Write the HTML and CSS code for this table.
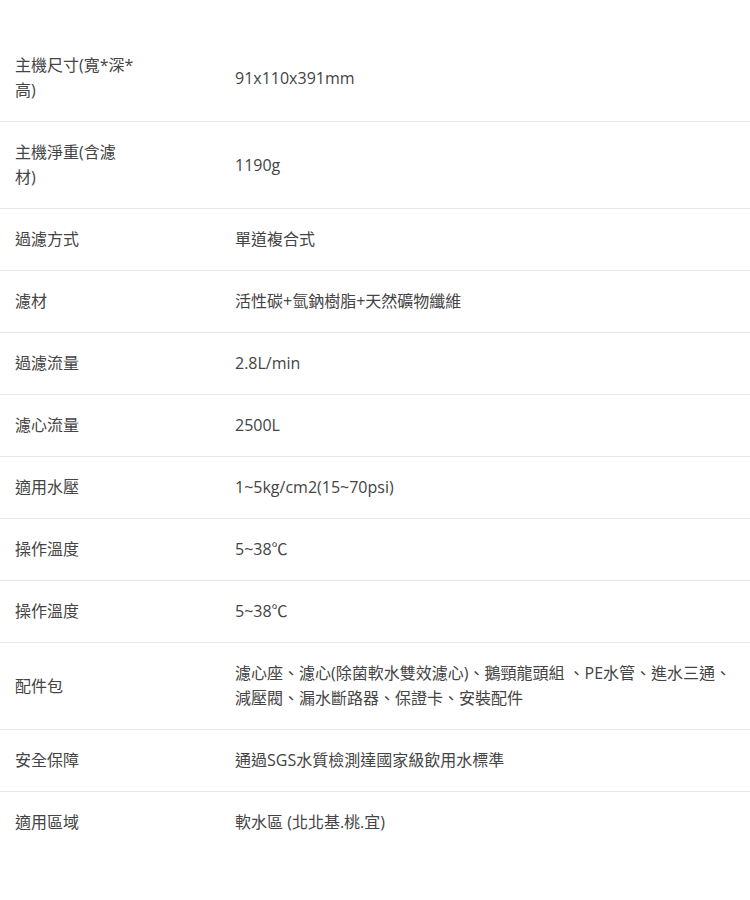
FILE: index.html
```html
<!DOCTYPE html>
<html lang="zh-Hant">
<head>
<meta charset="utf-8">
<title>規格</title>
<link rel="stylesheet" href="styles.css">
</head>
<body>
<div class="specs">
  <div class="row"><div class="label">主機尺寸(寬*深*高)</div><div class="value">91x110x391mm</div></div>
  <div class="row"><div class="label">主機淨重(含濾材)</div><div class="value">1190g</div></div>
  <div class="row"><div class="label">過濾方式</div><div class="value">單道複合式</div></div>
  <div class="row"><div class="label">濾材</div><div class="value">活性碳+氫鈉樹脂+天然礦物纖維</div></div>
  <div class="row"><div class="label">過濾流量</div><div class="value">2.8L/min</div></div>
  <div class="row"><div class="label">濾心流量</div><div class="value">2500L</div></div>
  <div class="row"><div class="label">適用水壓</div><div class="value">1~5kg/cm2(15~70psi)</div></div>
  <div class="row"><div class="label">操作溫度</div><div class="value">5~38℃</div></div>
  <div class="row"><div class="label">操作溫度</div><div class="value">5~38℃</div></div>
  <div class="row"><div class="label">配件包</div><div class="value">濾心座、濾心(除菌軟水雙效濾心)、鵝頸龍頭組 、PE水管、進水三通、減壓閥、漏水斷路器、保證卡、安裝配件</div></div>
  <div class="row"><div class="label">安全保障</div><div class="value">通過SGS水質檢測達國家級飲用水標準</div></div>
  <div class="row last"><div class="label">適用區域</div><div class="value">軟水區 (北北基.桃.宜)</div></div>
</div>
</body>
</html>
```
FILE: styles.css
```css
html, body {
  margin: 0;
  padding: 0;
  background: #ffffff;
}
body {
  font-family: "Open Sans", "Noto Sans CJK TC", sans-serif;
  font-size: 16px;
  line-height: 25px;
  color: #444444;
}
.specs {
  padding-top: 35px;
}
.row {
  display: grid;
  grid-template-columns: 235px 1fr;
  align-items: center;
  border-bottom: 1px solid #e8e8e8;
}
.row.last {
  border-bottom: none;
}
.label {
  padding: 18px 99px 18px 15px;
}
.value {
  padding: 18px 15px 18px 0;
}
```
